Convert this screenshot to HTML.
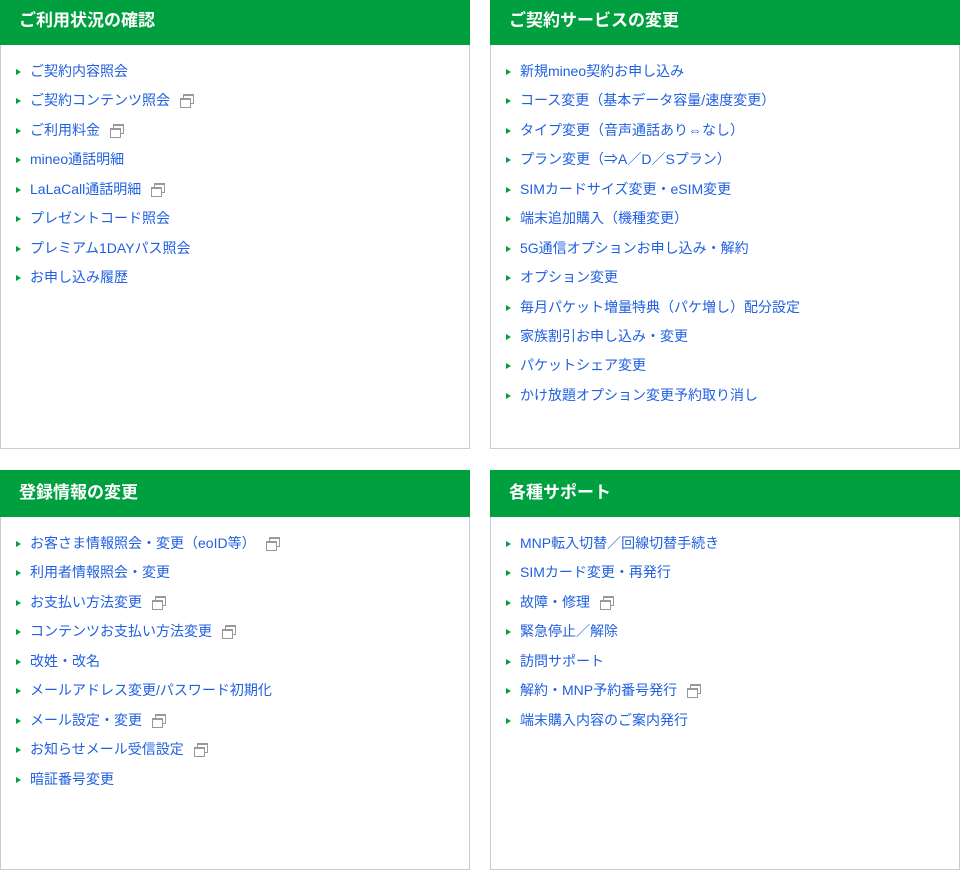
<!DOCTYPE html>
<html><head><meta charset="utf-8"><style>
*{margin:0;padding:0;box-sizing:border-box}
body{width:960px;height:856px;background:#fff;font-family:"Liberation Sans","Noto Sans CJK JP",sans-serif;position:relative;overflow:hidden}
.box{position:absolute;width:470px;border:1px solid #ccc;border-top:none;background:#fff}
.hd{background:#00a040;color:#fff;font-weight:bold;font-size:17px;padding-left:19px;margin:0 -1px}
ul{list-style:none;padding-top:12px}
li{height:29.45px;line-height:29.45px;font-size:14px;color:#2160e0;padding-left:29px;position:relative;white-space:nowrap}
li:before{content:"";position:absolute;left:15px;top:12px;border-left:5px solid #00a040;border-top:3.5px solid transparent;border-bottom:3.5px solid transparent}
.w{display:inline-block;width:13px;height:11px;margin-left:10px;position:relative;vertical-align:0px}
.w:before{content:"";position:absolute;left:3px;top:0;width:9px;height:7px;border:1px solid #999;border-top-width:2px;background:#fff}
.w:after{content:"";position:absolute;left:0;top:4px;width:9px;height:7px;border:1px solid #999;border-top-width:2px;background:#fff}
</style></head><body>
<div class="box" style="left:0;top:0;height:449px"><div class="hd" style="height:45px;line-height:42px">ご利用状況の確認</div><ul>
<li>ご契約内容照会</li><li>ご契約コンテンツ照会<span class="w"></span></li><li>ご利用料金<span class="w"></span></li><li>mineo通話明細</li><li>LaLaCall通話明細<span class="w"></span></li><li>プレゼントコード照会</li><li>プレミアム1DAYパス照会</li><li>お申し込み履歴</li></ul></div>
<div class="box" style="left:490px;top:0;height:449px"><div class="hd" style="height:45px;line-height:42px">ご契約サービスの変更</div><ul>
<li>新規mineo契約お申し込み</li><li>コース変更（基本データ容量/速度変更）</li><li>タイプ変更（音声通話あり⇔なし）</li><li>プラン変更（⇒A／D／Sプラン）</li><li>SIMカードサイズ変更・eSIM変更</li><li>端末追加購入（機種変更）</li><li>5G通信オプションお申し込み・解約</li><li>オプション変更</li><li>毎月パケット増量特典（パケ増し）配分設定</li><li>家族割引お申し込み・変更</li><li>パケットシェア変更</li><li>かけ放題オプション変更予約取り消し</li></ul></div>
<div class="box" style="left:0;top:470px;height:400px"><div class="hd" style="height:47px;line-height:46px">登録情報の変更</div><ul>
<li>お客さま情報照会・変更（eoID等）<span class="w"></span></li><li>利用者情報照会・変更</li><li>お支払い方法変更<span class="w"></span></li><li>コンテンツお支払い方法変更<span class="w"></span></li><li>改姓・改名</li><li>メールアドレス変更/パスワード初期化</li><li>メール設定・変更<span class="w"></span></li><li>お知らせメール受信設定<span class="w"></span></li><li>暗証番号変更</li></ul></div>
<div class="box" style="left:490px;top:470px;height:400px"><div class="hd" style="height:47px;line-height:46px">各種サポート</div><ul>
<li>MNP転入切替／回線切替手続き</li><li>SIMカード変更・再発行</li><li>故障・修理<span class="w"></span></li><li>緊急停止／解除</li><li>訪問サポート</li><li>解約・MNP予約番号発行<span class="w"></span></li><li>端末購入内容のご案内発行</li></ul></div>
</body></html>
